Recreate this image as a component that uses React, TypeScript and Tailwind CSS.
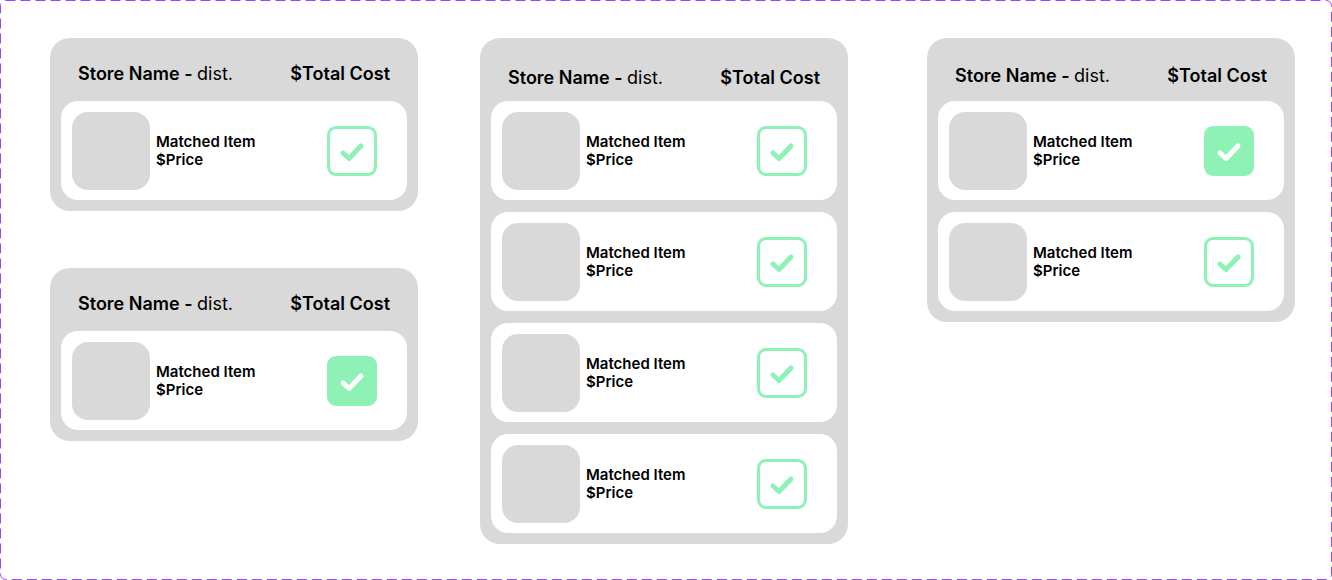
const font = { fontFamily: 'Inter, "Liberation Sans", sans-serif' };

function CheckBox({ checked }: { checked: boolean }) {
  return (
    <div
      className={
        checked
          ? 'w-[50px] h-[50px] rounded-[9px] bg-[#8ef2b6] flex items-center justify-center shrink-0'
          : 'w-[50px] h-[50px] rounded-[9px] border-[3px] border-[#8ef2b6] bg-white flex items-center justify-center shrink-0'
      }
    >
      <svg width="50" height="50" viewBox="0 0 50 50" className={checked ? '' : '-m-[3px]'}>
        <path
          d="M16 27 L22 32.5 L34 20"
          fill="none"
          stroke={checked ? '#ffffff' : '#8ef2b6'}
          strokeWidth="5"
          strokeLinecap="round"
          strokeLinejoin="round"
        />
      </svg>
    </div>
  );
}

function ItemRow({ checked }: { checked: boolean }) {
  return (
    <div className="h-[99px] bg-white rounded-[17px] flex items-center pl-[11px] pr-[30px]">
      <div className="w-[78px] h-[78px] rounded-[16px] bg-[#d9d9d9] shrink-0" />
      <div className="ml-[6px] flex-1 text-[15px] leading-[18px] font-semibold text-black">
        <div>Matched Item</div>
        <div>$Price</div>
      </div>
      <CheckBox checked={checked} />
    </div>
  );
}

function StoreCard({ items, headerPad }: { items: boolean[]; headerPad: string }) {
  return (
    <div className="w-[368px] bg-[#d9d9d9] rounded-[20px] px-[11px] pb-[11px]">
      <div className={`h-[63px] ${headerPad}`}>
        <div className="flex justify-between px-[17px] text-[18px] leading-[22px] text-black">
          <span>
            <span className="font-semibold">Store Name - </span>
            <span>dist.</span>
          </span>
          <span className="font-semibold">$Total Cost</span>
        </div>
      </div>
      <div className="flex flex-col gap-[12px]">
        {items.map((c, i) => (
          <ItemRow key={i} checked={c} />
        ))}
      </div>
    </div>
  );
}

export default function App() {
  return (
    <div style={font} className="relative w-[1332px] h-[580px] bg-white">
      {/* dashed frame */}
      <svg className="absolute inset-0 pointer-events-none" width="1332" height="580">
        <rect
          x="0.5"
          y="0.5"
          width="1331"
          height="579"
          rx="5"
          fill="none"
          stroke="#9747ff"
          strokeWidth="1"
          strokeDasharray="10 5"
        />
      </svg>
      <div className="w-full h-full flex items-start pt-[38px] pl-[50px]">
        <div className="flex flex-col gap-[57px]">
          <StoreCard items={[false]} headerPad="pt-[25px]" />
          <StoreCard items={[true]} headerPad="pt-[25px]" />
        </div>
        <div className="ml-[62px]">
          <StoreCard items={[false, false, false, false]} headerPad="pt-[29px]" />
        </div>
        <div className="ml-[79px]">
          <StoreCard items={[true, false]} headerPad="pt-[27px]" />
        </div>
      </div>
    </div>
  );
}
